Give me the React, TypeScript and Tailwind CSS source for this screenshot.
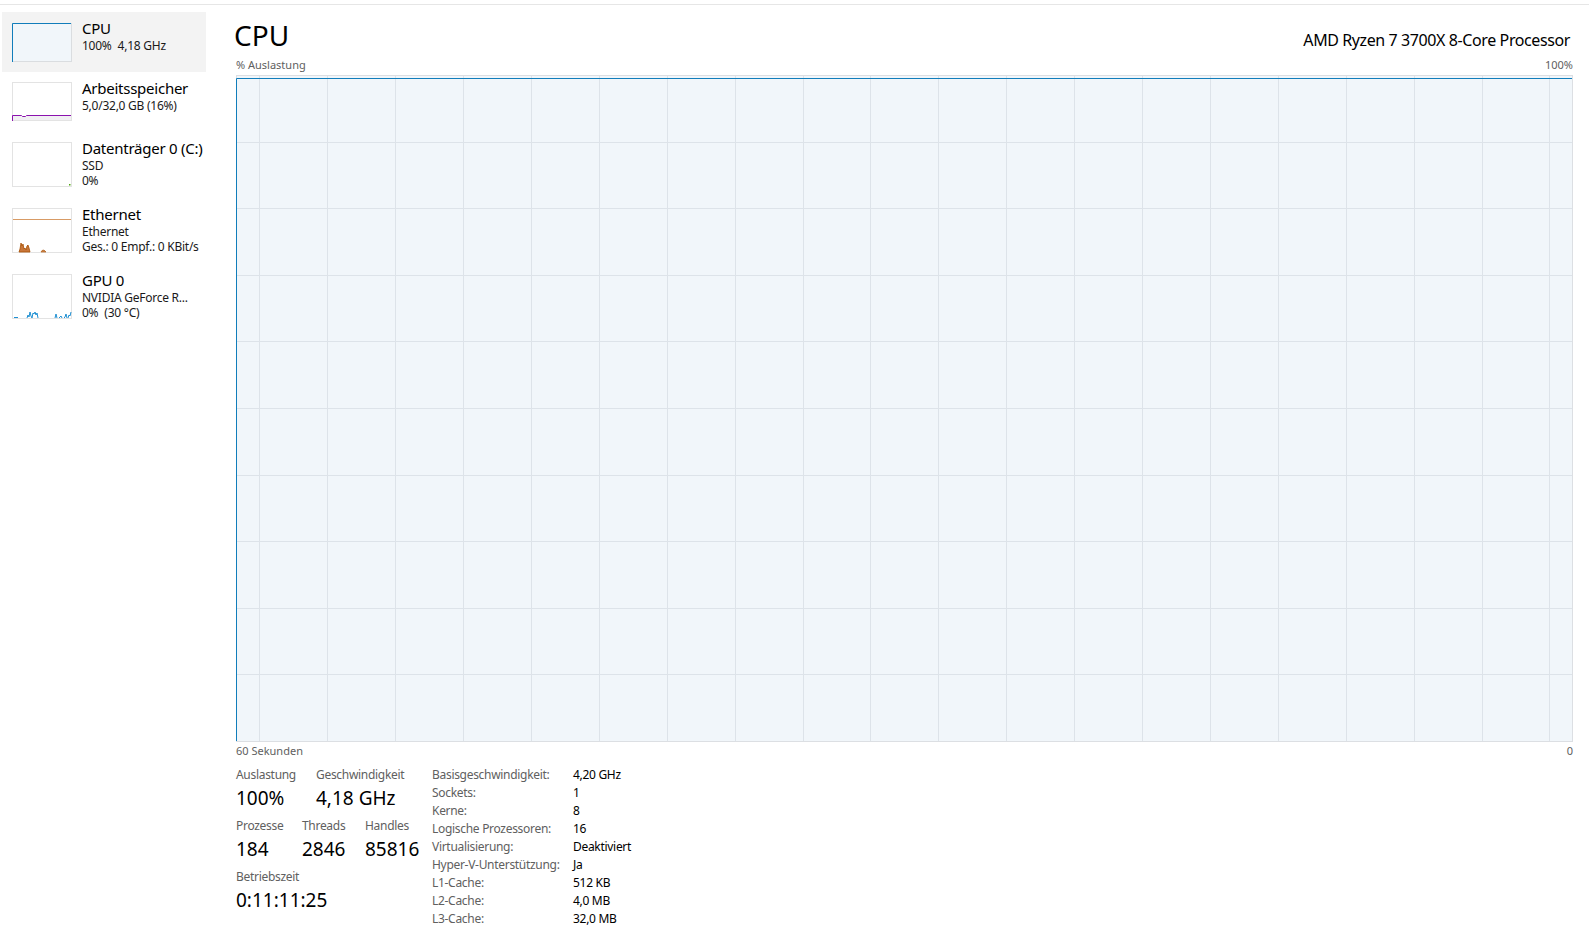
import React from "react";

const BLUE = "#117dbb";

function CpuThumb() {
  return (
    <svg width="60" height="39" viewBox="0 0 60 39" className="block">
      <rect x="0.5" y="0.5" width="59" height="38" fill="#f1f6fa" stroke="#dadde0" />
      <path d="M0.5 39 V0.5 H59" fill="none" stroke={BLUE} strokeWidth="1" />
    </svg>
  );
}

function MemThumb() {
  return (
    <svg width="60" height="39" viewBox="0 0 60 39" className="block">
      <rect x="0.5" y="0.5" width="59" height="38" fill="#ffffff" stroke="#e3e3e3" />
      <rect x="1" y="34" width="58" height="4" fill="#f1eff3" />
      <path d="M0.5 39 V33.5 H9.5 L10.5 34.5 H13.5 L14.5 33.5 H59" fill="none" stroke="#8b12ae" strokeWidth="1" />
    </svg>
  );
}

function DiskThumb() {
  return (
    <svg width="60" height="45" viewBox="0 0 60 45" className="block">
      <rect x="0.5" y="0.5" width="59" height="44" fill="#ffffff" stroke="#e3e3e3" />
      <rect x="57" y="42" width="1.5" height="1.5" fill="#4da60c" />
    </svg>
  );
}

function EthThumb() {
  return (
    <svg width="60" height="45" viewBox="0 0 60 45" className="block">
      <rect x="0.5" y="0.5" width="59" height="44" fill="#ffffff" stroke="#e3e3e3" />
      <path d="M1 11.5 H59" stroke="#d89b65" strokeWidth="1" />
      <path
        d="M7 44 L8 41 L9 35 L10 38 L11 36 L12 41 L13 40 L14 42 L15 38 L16 37 L17 40 L18 44 Z"
        fill="#c8763a"
        stroke="#a74f01"
        strokeWidth="0.8"
      />
      <path d="M29 44 L30 42.5 L32 42 L33 43 L34 44 Z" fill="#d08a55" stroke="#a74f01" strokeWidth="0.6" />
    </svg>
  );
}

function GpuThumb() {
  return (
    <svg width="60" height="45" viewBox="0 0 60 45" className="block">
      <rect x="0.5" y="0.5" width="59" height="44" fill="#ffffff" stroke="#e3e3e3" />
      <path
        d="M2 44 L3 43 L4 44 L5 43 L6 44 M15 44 L16 41 L17 43 L18 38 L19 42 L20 44 M20 44 L21 39 L22 40 L23 38 L24 41 L25 39 L26 44 M43 44 L44 40 L45 44 M47 44 L48 43 L49 42 L50 44 M52 44 L53 43 L54 40 L55 44 M56 44 L57 41 L58 42 L59 38"
        fill="none"
        stroke="#1e8fd2"
        strokeWidth="1"
      />
    </svg>
  );
}

type Item = {
  title: string;
  lines: React.ReactNode[];
  thumb: React.ReactNode;
  selected?: boolean;
  h: string;
};

function SideItem({ item }: { item: Item }) {
  return (
    <div
      className={
        "flex items-start pl-[10px] pt-[6px] " +
        item.h +
        (item.selected ? " bg-[#f3f3f3]" : "")
      }
    >
      <div className={(item.selected ? "mt-[5px]" : "mt-[4px]") + " shrink-0"}>{item.thumb}</div>
      <div className="ml-[10px] flex flex-col">
        <div className="text-[15px] leading-[20px] tracking-[-0.25px] text-black whitespace-nowrap">{item.title}</div>
        {item.lines.map((l, i) => (
          <div key={i} className="text-[12px] leading-[15px] tracking-[-0.25px] text-[#1a1a1a] whitespace-nowrap">
            {l}
          </div>
        ))}
      </div>
    </div>
  );
}

function MainGraph() {
  const W = 1337;
  const H = 667;
  const vlines: number[] = [];
  for (let k = 0; k < 20; k++) vlines.push(Math.round(23.3 + 67.9 * k) + 0.5);
  const hlines: number[] = [];
  for (let k = 1; k < 10; k++) hlines.push(Math.round(66.6 * k) + 0.5);
  return (
    <svg width={W} height={H} viewBox={`0 0 ${W} ${H}`} className="block">
      <rect x="0.5" y="0.5" width={W - 1} height={H - 1} fill="#f1f6fa" stroke="#dcdfe3" />
      {vlines.map((x) => (
        <line key={"v" + x} x1={x} y1={1} x2={x} y2={H - 1} stroke="#dde3e9" strokeWidth="1" />
      ))}
      {hlines.map((y) => (
        <line key={"h" + y} x1={1} y1={y} x2={W - 1} y2={y} stroke="#dde3e9" strokeWidth="1" />
      ))}
      <path d={`M0.5 ${H - 1} V3.5 H${W - 1}`} fill="none" stroke={BLUE} strokeWidth="1" />
    </svg>
  );
}

function Stat({ label, value, w }: { label: string; value: string; w?: string }) {
  return (
    <div className={w ?? ""}>
      <div className="text-[12px] leading-[16px] tracking-[-0.3px] text-[#606060] whitespace-nowrap">{label}</div>
      <div className="mt-[3px] text-[19px] leading-[24px] text-black whitespace-nowrap">{value}</div>
    </div>
  );
}

export default function App() {
  const items: Item[] = [
    {
      title: "CPU",
      lines: [
        <span>
          100%<span className="ml-[6px]">4,18 GHz</span>
        </span>,
      ],
      thumb: <CpuThumb />,
      selected: true,
      h: "h-[60px]",
    },
    {
      title: "Arbeitsspeicher",
      lines: ["5,0/32,0 GB (16%)"],
      thumb: <MemThumb />,
      h: "h-[60px]",
    },
    {
      title: "Datenträger 0 (C:)",
      lines: ["SSD", "0%"],
      thumb: <DiskThumb />,
      h: "h-[66px]",
    },
    {
      title: "Ethernet",
      lines: ["Ethernet", "Ges.: 0 Empf.: 0 KBit/s"],
      thumb: <EthThumb />,
      h: "h-[66px]",
    },
    {
      title: "GPU 0",
      lines: [
        "NVIDIA GeForce R...",
        <span>
          0%<span className="ml-[6px]">(30 °C)</span>
        </span>,
      ],
      thumb: <GpuThumb />,
      h: "h-[66px]",
    },
  ];

  const table: [string, string][] = [
    ["Basisgeschwindigkeit:", "4,20 GHz"],
    ["Sockets:", "1"],
    ["Kerne:", "8"],
    ["Logische Prozessoren:", "16"],
    ["Virtualisierung:", "Deaktiviert"],
    ["Hyper-V-Unterstützung:", "Ja"],
    ["L1-Cache:", "512 KB"],
    ["L2-Cache:", "4,0 MB"],
    ["L3-Cache:", "32,0 MB"],
  ];

  return (
    <div className="w-[1589px] h-[948px] bg-white overflow-hidden font-['Segoe_UI','Noto_Sans',sans-serif] text-[#1a1a1a]">
      <div className="h-[4px]" />
      <div className="h-px bg-[#e6e6e6]" />
      <div className="flex">
        <aside className="ml-[2px] w-[204px] pt-[7px] flex flex-col">
          {items.map((it) => (
            <SideItem key={it.title} item={it} />
          ))}
        </aside>

        <main className="ml-[30px] w-[1337px] pt-[12px] flex flex-col">
          <div className="flex items-baseline justify-between">
            <div className="text-[28px] leading-[36px] text-black -ml-[2px]">CPU</div>
            <div className="text-[16px] leading-[22px] tracking-[-0.4px] text-black mr-[3px]">
              AMD Ryzen 7 3700X 8-Core Processor
            </div>
          </div>
          <div className="mt-[4px] flex justify-between text-[11px] leading-[16px] text-[#606060]">
            <span>% Auslastung</span>
            <span>100%</span>
          </div>
          <div className="mt-[2px]">
            <MainGraph />
          </div>
          <div className="mt-[1px] flex justify-between text-[11px] leading-[16px] text-[#606060]">
            <span>60 Sekunden</span>
            <span>0</span>
          </div>

          <div className="mt-[8px] flex">
            <div className="w-[196px] flex flex-col">
              <div className="flex">
                <Stat w="w-[80px]" label="Auslastung" value="100%" />
                <Stat label="Geschwindigkeit" value="4,18 GHz" />
              </div>
              <div className="mt-[8px] flex">
                <Stat w="w-[66px]" label="Prozesse" value="184" />
                <Stat w="w-[63px]" label="Threads" value="2846" />
                <Stat label="Handles" value="85816" />
              </div>
              <div className="mt-[8px]">
                <Stat label="Betriebszeit" value="0:11:11:25" />
              </div>
            </div>

            <div className="-mt-[1px] grid grid-cols-[141px_auto] text-[12px] leading-[18px] tracking-[-0.3px]">
              {table.map(([k, v]) => (
                <React.Fragment key={k}>
                  <div className="text-[#606060] whitespace-nowrap">{k}</div>
                  <div className="text-black whitespace-nowrap">{v}</div>
                </React.Fragment>
              ))}
            </div>
          </div>
        </main>
      </div>
    </div>
  );
}
